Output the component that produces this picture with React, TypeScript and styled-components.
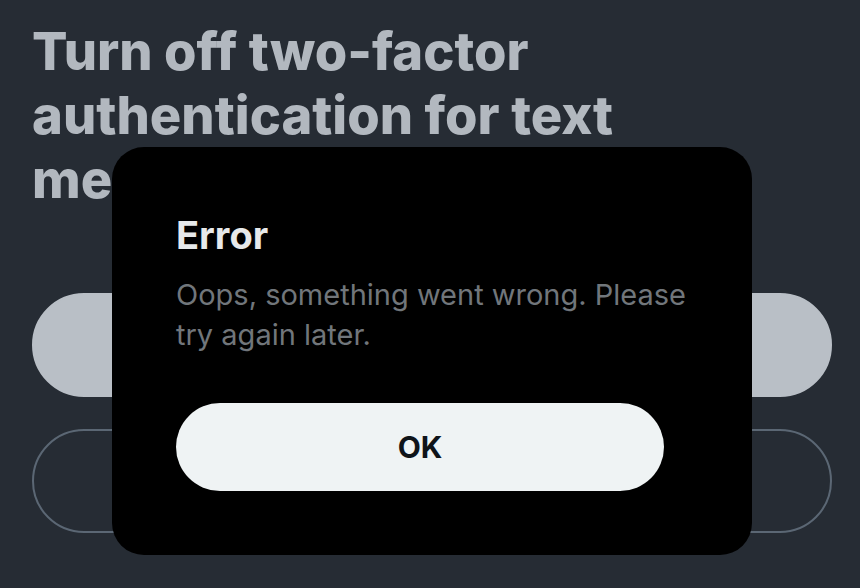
import React from "react"
import styled, {createGlobalStyle} from "styled-components"

const GlobalStyle = createGlobalStyle`
  html, body {
    margin: 0;
    padding: 0;
    background: #262c34;
    font-family: Inter, "Liberation Sans", sans-serif;
    -webkit-font-smoothing: antialiased;
  }
`

export default function App() {
    return (
        <>
            <GlobalStyle/>
            <Page>
                <Heading>
                    Turn off two-factor<br/>
                    authentication for text<br/>
                    message
                </Heading>
                <Actions>
                    <PillButton filled/>
                    <PillButton/>
                </Actions>
            </Page>
            <Dialog role="alertdialog">
                <DialogTitle>Error</DialogTitle>
                <DialogText>Oops, something went wrong. Please try again later.</DialogText>
                <OkButton>OK</OkButton>
            </Dialog>
        </>
    )
}

const Page = styled.div`
  width: 860px;
  height: 588px;
  box-sizing: border-box;
  padding: 19px 28px 0 32px;
  overflow: hidden;
`
const Heading = styled.h1`
  margin: 0;
  font-size: 52.5px;
  line-height: 64px;
  font-weight: 800;
  color: #b2b8bf;
`
const Actions = styled.div`
  display: flex;
  flex-direction: column;
  gap: 32px;
  margin-top: 82px;
`
const PillButton = styled.div<{ filled?: boolean }>`
  height: 104px;
  border-radius: 52px;
  box-sizing: border-box;
  background: ${p => p.filled ? "#b9bfc6" : "transparent"};
  border: 2px solid ${p => p.filled ? "#b9bfc6" : "#5b6774"};
`
const Dialog = styled.div`
  position: fixed;
  top: 147px;
  left: 112px;
  width: 640px;
  height: 408px;
  box-sizing: border-box;
  padding: 64px 88px 64px 64px;
  background: #000;
  border-radius: 32px;
  display: flex;
  flex-direction: column;
`
const DialogTitle = styled.div`
  font-size: 38px;
  line-height: 48px;
  font-weight: 700;
  color: #e7e9ea;
`
const DialogText = styled.div`
  margin-top: 16px;
  margin-right: -24px;
  font-size: 29px;
  line-height: 40px;
  color: #71767b;
`
const OkButton = styled.div`
  margin-top: 48px;
  height: 88px;
  border-radius: 44px;
  background: #eff3f4;
  color: #0f1419;
  font-size: 30px;
  font-weight: 700;
  display: flex;
  align-items: center;
  justify-content: center;
`
